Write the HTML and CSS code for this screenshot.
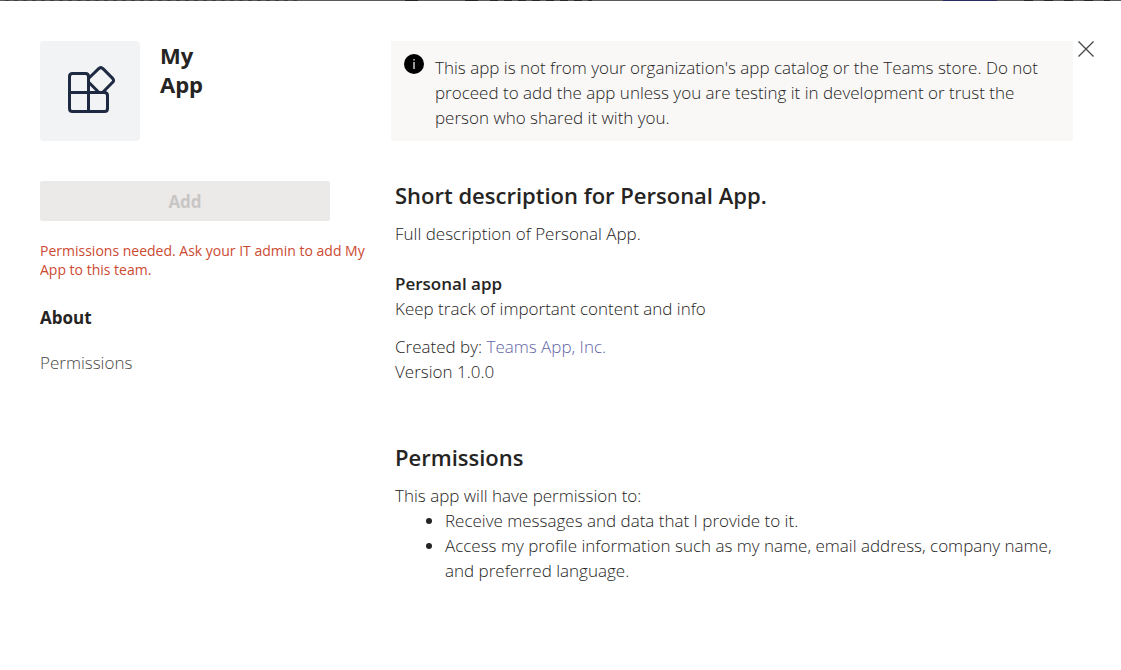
FILE: index.html
```html
<!DOCTYPE html>
<html lang="en">
<head>
<meta charset="utf-8">
<meta name="viewport" content="width=device-width, initial-scale=1">
<title>My App</title>
<link rel="stylesheet" href="styles.css">
</head>
<body>
<div class="backdrop"></div>
<div class="dialog" role="dialog" aria-labelledby="app-name">
  <aside class="side">
    <header class="app">
      <div class="app-tile">
        <svg class="app-icon" viewBox="0 0 100 100" aria-hidden="true">
          <path d="M48.5 51.5H29.5V35.5Q29.5 32.5 32.5 32.5H45.5Q48.5 32.5 48.5 35.5V70.5M48.5 51.5H64.5Q67.5 51.5 67.5 54.5V67.5Q67.5 70.5 64.5 70.5H32.5Q29.5 70.5 29.5 67.5V51.5"/>
          <path d="M58.4 27.9Q60.8 25.5 63.2 27.9L72.4 37.1Q74.8 39.5 72.4 41.5L62.6 51.5H59L48.5 41V37.5Z"/>
        </svg>
      </div>
      <h1 class="app-name" id="app-name">My App</h1>
    </header>
    <button class="add" type="button" disabled>Add</button>
    <p class="error">Permissions needed. Ask your IT admin to add My App to this team.</p>
    <nav class="tabs">
      <a class="tab tab-active" href="#about">About</a>
      <a class="tab" href="#permissions">Permissions</a>
    </nav>
  </aside>
  <main class="main">
    <div class="notice">
      <svg class="notice-icon" viewBox="0 0 20 20" aria-hidden="true">
        <circle cx="10" cy="10" r="10"/>
        <path d="M9.4 5h1.2v1.5H9.4zM9.4 8h1.2v7H9.4z" fill="#fff"/>
      </svg>
      <p class="notice-text">This app is not from your organization's app catalog or the Teams store. Do not proceed to add the app unless you are testing it in development or trust the person who shared it with you.</p>
    </div>
    <section class="section" id="about">
      <h2 class="heading">Short description for Personal App.</h2>
      <p class="text">Full description of Personal App.</p>
      <h3 class="subheading">Personal app</h3>
      <p class="text">Keep track of important content and info</p>
      <p class="text meta">Created by: <a class="link" href="#publisher">Teams App, Inc.</a><br>Version 1.0.0</p>
    </section>
    <section class="section permissions" id="permissions">
      <h2 class="heading">Permissions</h2>
      <p class="text">This app will have permission to:</p>
      <ul class="list">
        <li>Receive messages and data that I provide to it.</li>
        <li>Access my profile information such as my name, email address, company name, and preferred language.</li>
      </ul>
    </section>
  </main>
  <button class="close" type="button" aria-label="Close">
    <svg class="close-icon" viewBox="0 0 16 16" aria-hidden="true"><path d="M.5 .5l15 15M15.5 .5l-15 15"/></svg>
  </button>
</div>
</body>
</html>
```

FILE: styles.css
```css
* {
  box-sizing: border-box;
}

body {
  margin: 0;
  background: #fff;
  color: #252423;
  font-family: "Segoe UI", "Open Sans", "Noto Sans", sans-serif;
  font-size: 17px;
  font-weight: 300;
  line-height: 25px;
}

h1, h2, h3, p, ul {
  margin: 0;
  font-size: inherit;
}

.backdrop {
  height: 1px;
  background:
    linear-gradient(#292b60, #292b60) 943px 0 / 54px 1px no-repeat,
    repeating-linear-gradient(90deg, #2a2626 0 8px, #5c5a5a 8px 14px) 490px 0 / 102px 1px no-repeat,
    linear-gradient(#252323, #252323) 465px 0 / 13px 1px no-repeat,
    linear-gradient(#252323, #252323) 405px 0 / 13px 1px no-repeat,
    repeating-linear-gradient(90deg, #2a2626 0 9px, #5c5a5a 9px 20px) 1024px 0 / 86px 1px no-repeat,
    repeating-linear-gradient(90deg, #5c5a5a 0 5px, #3c3b40 5px 9px) 0 0 / 298px 1px no-repeat,
    #5c5a5a;
}

.dialog {
  display: grid;
  grid-template-columns: 351px minmax(0, 1fr) 25px;
  padding: 40px 23px 40px 40px;
}

.app {
  display: flex;
  gap: 20px;
  margin-bottom: 40px;
}

.app-tile {
  flex: none;
  width: 100px;
  height: 100px;
  border-radius: 4px;
  background: #f2f3f5;
}

.app-icon {
  display: block;
  fill: none;
  stroke: #1d2a42;
  stroke-width: 3;
  stroke-linejoin: round;
}

.app-name {
  width: min-content;
  font-size: 22px;
  font-weight: 700;
  line-height: 29px;
}

.add {
  display: block;
  width: 290px;
  height: 40px;
  border: 0;
  border-radius: 2px;
  background: #ebeae9;
  color: #c8c6c4;
  font: inherit;
  font-weight: 700;
}

.error {
  max-width: 340px;
  margin-top: 20px;
  color: #cc4a31;
  font-size: 14px;
  font-weight: 400;
  line-height: 19px;
}

.tabs {
  display: grid;
  justify-items: start;
  gap: 20px;
  margin-top: 26px;
}

.tab {
  color: #484644;
  text-decoration: none;
}

.tab-active {
  color: #252423;
  font-weight: 700;
}

.notice {
  display: flex;
  gap: 11px;
  min-height: 100px;
  padding: 13px 16px 11px 13px;
  background: #f9f8f7;
}

.notice-icon {
  flex: none;
  width: 20px;
  height: 20px;
}

.notice-text {
  padding-top: 1px;
}

.section {
  padding: 40px 4px 0;
}

.heading {
  margin-bottom: 12px;
  font-size: 22px;
  font-weight: 600;
  line-height: 28px;
}

.subheading {
  margin-top: 25px;
  font-weight: 600;
}

.meta {
  margin-top: 13px;
}

.link {
  color: #6264a7;
  text-decoration: none;
}

.permissions {
  padding-top: 59px;
}

.list {
  padding-left: 50px;
}

.close {
  justify-self: end;
  width: 20px;
  height: 16px;
  padding: 0;
  border: 0;
  background: none;
}

.close-icon {
  display: block;
  width: 16px;
  height: 16px;
  fill: none;
  stroke: #484644;
  stroke-width: 1.3;
}
```
